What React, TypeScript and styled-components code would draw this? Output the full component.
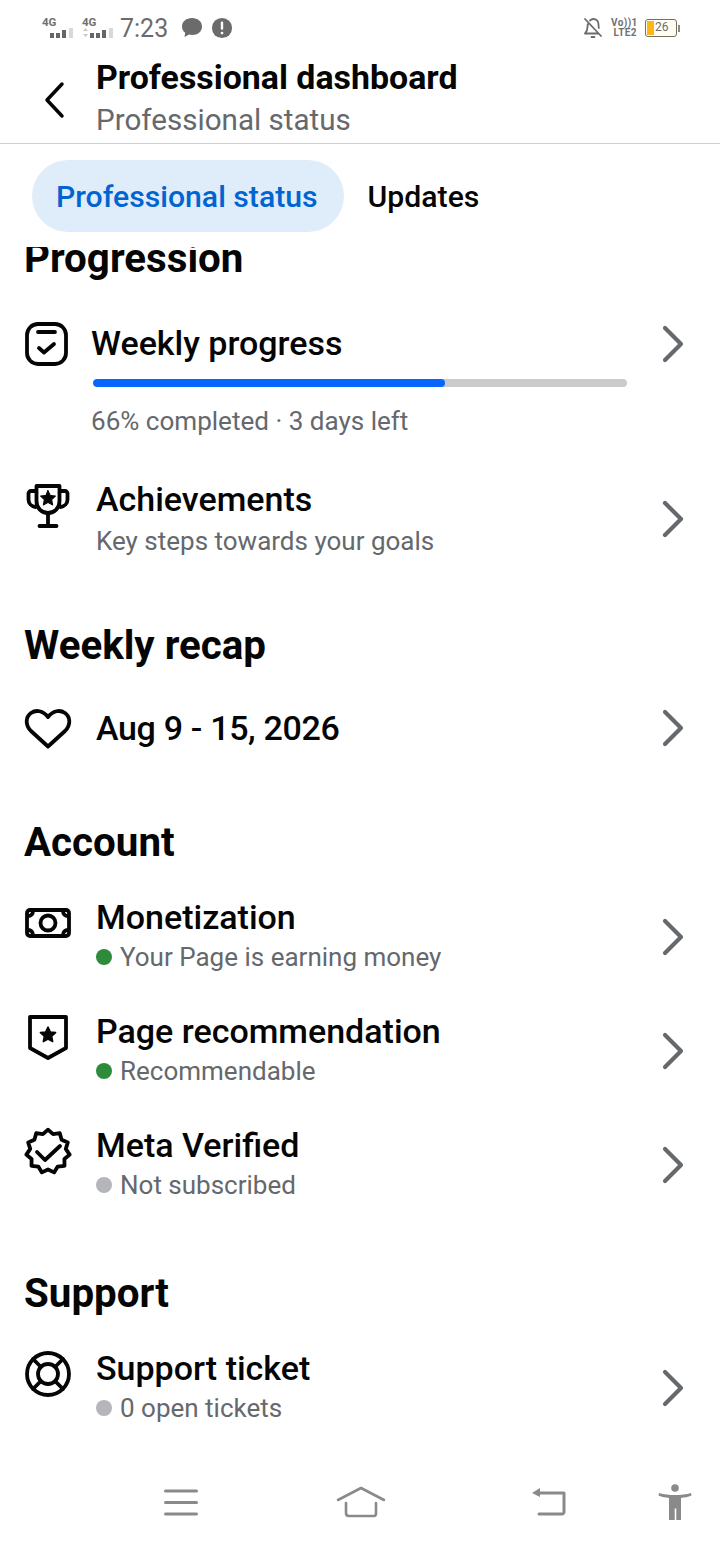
import React from "react";
import styled, { createGlobalStyle } from "styled-components";

const Global = createGlobalStyle`
  html, body { margin: 0; padding: 0; background: #fff; }
  body { font-family: Roboto, "Liberation Sans", sans-serif; color: #050505; }
  * { box-sizing: border-box; }
`;

const Page = styled.div`
  width: 720px;
  height: 1544px;
  display: flex;
  flex-direction: column;
  overflow: hidden;
  background: #fff;
`;

const StatusBar = styled.div`
  height: 56px;
  flex: none;
  display: flex;
  align-items: center;
  justify-content: space-between;
  padding: 0 40px 0 42px;
`;
const StatusGroup = styled.div<{ $gap: number }>`
  display: flex;
  align-items: center;
  gap: ${(p) => p.$gap}px;
`;
const Clock = styled.span`
  font-size: 25px;
  color: #6b6b6b;
  line-height: 1;
  margin: 0 5px 0 -2px;
`;
const SignalWrap = styled.div`
  position: relative;
  width: 32px;
  height: 22px;
`;
const SignalLabel = styled.span`
  position: absolute;
  left: 0;
  top: 0;
  font-size: 11.5px;
  font-weight: 700;
  line-height: 11px;
  color: #707070;
`;
const SimStack = styled.div`
  width: 26px;
  display: flex;
  flex-direction: column;
`;
const SimLabel = styled.div`
  font-size: 10px;
  font-weight: 700;
  line-height: 10px;
  letter-spacing: 0.4px;
  color: #707070;
  white-space: nowrap;
  text-align: right;
`;
const Battery = styled.div`
  position: relative;
  width: 32px;
  height: 18px;
  border: 1.5px solid #77705f;
  border-radius: 3px;
  background: #fffdf2;
  font-size: 12px;
  line-height: 15px;
  color: #6b6b6b;
  padding-left: 9px;
  overflow: hidden;
`;
const BatteryFill = styled.div`
  position: absolute;
  left: 1px;
  top: 1px;
  bottom: 1px;
  width: 7px;
  background: #fdb813;
`;
const BatteryTip = styled.div`
  width: 2px;
  height: 7px;
  background: #8a8a8a;
  margin-left: 1px;
`;

const Header = styled.header`
  height: 88px;
  flex: none;
  display: flex;
  align-items: flex-start;
  border-bottom: 1px solid #ced0d4;
`;
const BackButton = styled.div`
  width: 96px;
  flex: none;
  padding: 24px 0 0 42px;
`;
const HeaderText = styled.div`
  display: flex;
  flex-direction: column;
`;
const Title = styled.div`
  font-size: 33.9px;
  font-weight: 700;
  line-height: 43px;
  color: #050505;
`;
const Subtitle = styled.div`
  font-size: 29.6px;
  line-height: 43px;
  color: #65686c;
`;

const Tabs = styled.nav`
  flex: none;
  display: flex;
  align-items: center;
  padding: 16px 0 15px 32px;
`;
const Tab = styled.div<{ $active?: boolean }>`
  height: 72px;
  border-radius: 36px;
  display: flex;
  align-items: center;
  padding: 0 26px 0 24px;
  font-size: 30.2px;
  font-weight: 500;
  color: ${(p) => (p.$active ? "#0064d1" : "#050505")};
  background: ${(p) => (p.$active ? "#dfecfa" : "transparent")};
`;

const Scroll = styled.main`
  flex: 1;
  min-height: 0;
  overflow: hidden;
`;
const ScrollInner = styled.div`
  margin-top: -10px;
  display: flex;
  flex-direction: column;
`;
const SectionTitle = styled.h2<{ $top: number }>`
  margin: ${(p) => p.$top}px 0 0 24px;
  font-size: 40.3px;
  line-height: 44px;
  font-weight: 700;
  color: #050505;
`;

const ProgressRow = styled.div`
  margin-top: 40px;
  height: 126px;
  display: grid;
  grid-template-columns: 91px 536px 1fr;
  align-items: start;
`;
const IconCell = styled.div<{ $top?: number }>`
  padding: ${(p) => p.$top ?? 0}px 0 0 24px;
  display: flex;
`;
const ProgressBody = styled.div`
  display: flex;
  flex-direction: column;
`;
const ProgressTitle = styled.div`
  font-size: 34px;
  line-height: 44px;
  font-weight: 500;
  color: #050505;
`;
const Track = styled.div`
  margin: 14px 0 0 2px;
  height: 8px;
  border-radius: 4px;
  background: #cbcbcb;
  overflow: hidden;
`;
const Fill = styled.div`
  height: 100%;
  border-radius: 4px;
  background: #0866ff;
`;
const ProgressCaption = styled.div`
  margin-top: 17px;
  font-size: 26.05px;
  line-height: 34px;
  color: #65686c;
`;
const Row = styled.div<{ $top: number; $height: number; $center?: boolean }>`
  margin-top: ${(p) => p.$top}px;
  height: ${(p) => p.$height}px;
  display: grid;
  grid-template-columns: 96px 1fr 60px;
  align-items: ${(p) => (p.$center ? "center" : "start")};
`;
const RowBody = styled.div`
  display: flex;
  flex-direction: column;
`;
const RowTitle = styled.div`
  font-size: 34px;
  line-height: 42px;
  font-weight: 500;
  color: #050505;
`;
const DateTitle = styled(RowTitle)`
  letter-spacing: -0.33px;
`;
const RowSub = styled.div<{ $gapTop?: number }>`
  margin-top: ${(p) => p.$gapTop ?? 0}px;
  display: flex;
  align-items: center;
  gap: 8px;
  font-size: 26px;
  line-height: 38px;
  color: #65686c;
`;
const Dot = styled.span<{ $on: boolean }>`
  width: 16px;
  height: 16px;
  border-radius: 50%;
  background: ${(p) => (p.$on ? "#2e8b3a" : "#b4b6bc")};
`;
const ChevronCell = styled.div<{ $left?: number; $top?: number; $start?: boolean }>`
  display: flex;
  align-self: ${(p) => (p.$start ? "start" : "center")};
  padding: ${(p) => p.$top ?? 2}px 0 0 ${(p) => p.$left ?? 2}px;
`;

const BottomNav = styled.footer`
  height: 80px;
  flex: none;
  display: grid;
  grid-template-columns: 336px 196px 1fr;
  align-items: center;
  padding-bottom: 4px;
`;
const NavCell = styled.div<{ $pad: number }>`
  display: flex;
  padding-left: ${(p) => p.$pad}px;
`;
const NavSplit = styled.div`
  display: flex;
  align-items: center;
  justify-content: space-between;
  padding-right: 28px;
`;

const Ic: React.FC<{ children: React.ReactNode }> = ({ children }) => (
  <svg width={48} height={48} viewBox="0 0 48 48" fill="none" stroke="#050505" strokeWidth="3.8" strokeLinecap="round" strokeLinejoin="round">
    {children}
  </svg>
);
const starPath = "M24 0l2.3 4.9 5.3.7-3.9 3.7 1 5.3-4.7-2.6-4.7 2.6 1-5.3-3.9-3.7 5.3-.7z";

const badgePath = (() => {
  const n = 11;
  const pts: string[] = [];
  for (let i = 0; i < n * 2; i++) {
    const r = i % 2 === 0 ? 21.8 : 18;
    const a = (i * Math.PI) / n - Math.PI / 2;
    pts.push(`${(24 + r * Math.cos(a)).toFixed(1)} ${(24.5 + r * Math.sin(a)).toFixed(1)}`);
  }
  return `M${pts.join("L")}z`;
})();

const Chevron = () => (
  <svg width="24" height="40" viewBox="0 0 24 40" fill="none" stroke="#65686c" strokeWidth="4.2" strokeLinecap="round" strokeLinejoin="round">
    <path d="M3 4l16 16L3 36" />
  </svg>
);

const Signal: React.FC<{ arrows?: boolean }> = ({ arrows }) => (
  <SignalWrap>
    <SignalLabel>4G</SignalLabel>
    <svg width="32" height="22" viewBox="0 0 32 22">
      {arrows && <path d="M1 14l2.500-3 2.500 3zM1 17l2.500 3 2.500-3z" fill="#c8c8c8" />}
      <rect x="8" y="16" width="4" height="5" fill="#666" />
      <rect x="14" y="16" width="4" height="5" fill="#666" />
      <rect x="20" y="13" width="4" height="8" fill="#666" />
      <rect x="27" y="11" width="4" height="10" fill="#d8d8d8" />
    </svg>
  </SignalWrap>
);

const icons = {
  weekly: (
    <Ic>
      <rect x="3" y="3" width="39" height="40" rx="11" />
      <path d="M14 11h17" />
      <path d="M15 27l5 4.500 10-8.500" />
    </Ic>
  ),
  trophy: (
    <Ic>
      <path d="M12.500 4h23v15c0 7-5 12-11.500 12S12.500 26 12.500 19z" />
      <path d="M11 9H7a2.500 2.500 0 0 0-2.500 2.500v6c0 4 3 7 7 7.500M37 9h4a2.500 2.500 0 0 1 2.500 2.500v6c0 4-3 7-7 7.500" />
      <path d="M24 31v13M15.500 44h17" />
      <path d={starPath} transform="translate(0 8.500)" fill="#050505" strokeWidth="1" />
    </Ic>
  ),
  heart: (
    <Ic>
      <path d="M24 42.500L7 27C1 21 1.500 13 7 9c5-3.500 12-2.500 17 4 5-6.500 12-7.500 17-4 5.500 4 6 12 0 18z" />
    </Ic>
  ),
  money: (
    <Ic>
      <rect x="3" y="11" width="42" height="26" rx="3" />
      <circle cx="24" cy="24" r="7.500" />
      <path d="M4 17c3 0 5-2 5-5M44 17c-3 0-5-2-5-5M4 31c3 0 5 2 5 5M44 31c-3 0-5 2-5 5" />
    </Ic>
  ),
  shield: (
    <Ic>
      <path d="M6 4h36v31L24 45 6 35z" />
      <path d={starPath} transform="translate(0 14)" fill="#050505" strokeWidth="1.500" />
    </Ic>
  ),
  verified: (
    <Ic>
      <path d={badgePath} />
      <path d="M13 25l8 8 15-14" />
    </Ic>
  ),
  support: (
    <Ic>
      <circle cx="24" cy="24" r="21" />
      <circle cx="24" cy="24" r="10" />
      <path d="M9 9l8 8M39 9l-8 8M9 39l8-8M39 39l-8-8" />
    </Ic>
  ),
};

const account = [
  { icon: icons.money, title: "Monetization", sub: "Your Page is earning money", on: true },
  { icon: icons.shield, title: "Page recommendation", sub: "Recommendable", on: true },
  { icon: icons.verified, title: "Meta Verified", sub: "Not subscribed", on: false },
];

export default function App() {
  return (
    <Page>
      <Global />
      <StatusBar>
        <StatusGroup $gap={8}>
          <Signal />
          <Signal arrows />
          <Clock>7:23</Clock>
          <svg width="22" height="22" viewBox="0 0 22 22" fill="#6b6b6b">
            <path d="M11 1c5.700 0 10 3.500 10 8.500S16.700 18 11 18c-1 0-2-.1-3-.4L3.500 20l.7-4.300C2 14.200 1 12 1 9.500 1 4.500 5.300 1 11 1z" />
          </svg>
          <svg width="22" height="22" viewBox="0 0 24 24">
            <circle cx="12" cy="12" r="11" fill="#6b6b6b" />
            <rect x="10.700" y="5" width="2.600" height="9" rx="1.200" fill="#fff" />
            <circle cx="12" cy="17.500" r="1.500" fill="#fff" />
          </svg>
        </StatusGroup>
        <StatusGroup $gap={8}>
          <svg width="20" height="22" viewBox="0 0 20 22" fill="none" stroke="#6b6b6b" strokeWidth="1.800" strokeLinecap="round" strokeLinejoin="round">
            <path d="M2 2l16 17M5 7c-.5 1-.5 2-.5 3 0 3-1 5-2.500 6.500h13M7 3.500C8 2.500 9 2 10.500 2c3 0 5 2.500 5 5.500 0 1.500 0 2.500.4 3.500M8.500 20h3" />
          </svg>
          <SimStack>
            <SimLabel>Vo))1</SimLabel>
            <SimLabel>LTE2</SimLabel>
          </SimStack>
          <StatusGroup $gap={0}>
            <Battery>
              <BatteryFill />
              26
            </Battery>
            <BatteryTip />
          </StatusGroup>
        </StatusGroup>
      </StatusBar>

      <Header>
        <BackButton>
          <svg width="26" height="40" viewBox="0 0 26 40" fill="none" stroke="#050505" strokeWidth="3.500" strokeLinecap="round" strokeLinejoin="round">
            <path d="M20 4L5 20l15 16" />
          </svg>
        </BackButton>
        <HeaderText>
          <Title>Professional dashboard</Title>
          <Subtitle>Professional status</Subtitle>
        </HeaderText>
      </Header>

      <Tabs>
        <Tab $active>Professional status</Tab>
        <Tab>Updates</Tab>
      </Tabs>

      <Scroll>
        <ScrollInner>
          <SectionTitle $top={0}>Progression</SectionTitle>

          <ProgressRow>
            <IconCell>{icons.weekly}</IconCell>
            <ProgressBody>
              <ProgressTitle>Weekly progress</ProgressTitle>
              <Track>
                <Fill style={{ width: "66%" }} />
              </Track>
              <ProgressCaption>66% completed · 3 days left</ProgressCaption>
            </ProgressBody>
            <ChevronCell $start $left={35} $top={3}>
              <Chevron />
            </ChevronCell>
          </ProgressRow>

          <Row $top={31} $height={82}>
            <IconCell $top={4}>{icons.trophy}</IconCell>
            <RowBody>
              <RowTitle>Achievements</RowTitle>
              <RowSub $gapTop={2}>Key steps towards your goals</RowSub>
            </RowBody>
            <ChevronCell $top={0}>
              <Chevron />
            </ChevronCell>
          </Row>

          <SectionTitle $top={64}>Weekly recap</SectionTitle>

          <Row $top={35} $height={50} $center>
            <IconCell>{icons.heart}</IconCell>
            <RowBody>
              <DateTitle>Aug 9 - 15, 2026</DateTitle>
            </RowBody>
            <ChevronCell $top={0}>
              <Chevron />
            </ChevronCell>
          </Row>

          <SectionTitle $top={68}>Account</SectionTitle>

          {account.map((r, i) => (
            <Row key={r.title} $top={i === 0 ? 31 : 34} $height={80}>
              <IconCell $top={3}>{r.icon}</IconCell>
              <RowBody>
                <RowTitle>{r.title}</RowTitle>
                <RowSub>
                  <Dot $on={r.on} />
                  {r.sub}
                </RowSub>
              </RowBody>
              <ChevronCell>
                <Chevron />
              </ChevronCell>
            </Row>
          ))}

          <SectionTitle $top={68}>Support</SectionTitle>

          <Row $top={31} $height={80}>
            <IconCell $top={3}>{icons.support}</IconCell>
            <RowBody>
              <RowTitle>Support ticket</RowTitle>
              <RowSub>
                <Dot $on={false} />0 open tickets
              </RowSub>
            </RowBody>
            <ChevronCell>
              <Chevron />
            </ChevronCell>
          </Row>
        </ScrollInner>
      </Scroll>

      <BottomNav>
        <NavCell $pad={164}>
          <svg width="34" height="27" viewBox="0 0 34 27" stroke="#8a8a8a" strokeWidth="3" strokeLinecap="round">
            <path d="M1.500 2h31M1.500 13.500h31M1.500 25h31" />
          </svg>
        </NavCell>
        <NavCell $pad={0}>
          <svg width="50" height="32" viewBox="0 0 50 32" fill="none" stroke="#8a8a8a" strokeWidth="2.600" strokeLinecap="round" strokeLinejoin="round">
            <path d="M2 14L25 2l23 12M10 17v10c0 2 1 3 3 3h25c1 0 2-1 2-3V17" />
          </svg>
        </NavCell>
        <NavSplit>
          <svg width="36" height="28" viewBox="0 0 36 28" fill="none" stroke="#8a8a8a" strokeWidth="3" strokeLinecap="round" strokeLinejoin="round">
            <path d="M6 5h26v19c0 1-1 2-2 2H7" />
            <path d="M0 5l8-5v9z" fill="#8a8a8a" stroke="none" />
          </svg>
          <svg width="34" height="36" viewBox="0 0 34 36" fill="#8a8a8a">
            <circle cx="17" cy="4" r="3.800" />
            <path d="M1 9c5 1.500 10 2 16 2s11-.5 16-2l.5 2.500c-3.500 1.500-7 2-10.500 2.500v22h-4.700V24.500h-1.600V36H11V14c-3.500-.5-7-1-10.500-2.500z" />
          </svg>
        </NavSplit>
      </BottomNav>
    </Page>
  );
}
